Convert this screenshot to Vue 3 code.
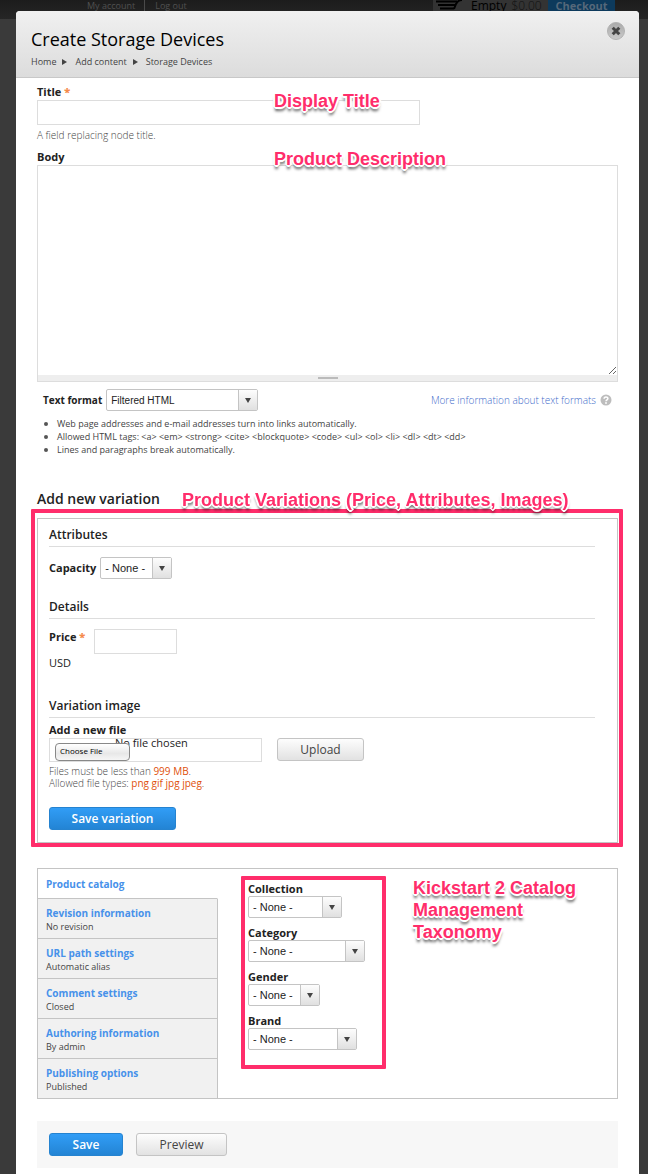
<script setup>
import { ref } from 'vue'

const title = ref('')
const body = ref('')
const price = ref('')

const tabs = [
  { name: 'Product catalog', summary: '' },
  { name: 'Revision information', summary: 'No revision' },
  { name: 'URL path settings', summary: 'Automatic alias' },
  { name: 'Comment settings', summary: 'Closed' },
  { name: 'Authoring information', summary: 'By admin' },
  { name: 'Publishing options', summary: 'Published' },
]
const active = ref(0)

const taxonomies = [
  { id: 'collection', label: 'Collection', size: 'w94' },
  { id: 'category', label: 'Category', size: 'w117' },
  { id: 'gender', label: 'Gender', size: 'w72' },
  { id: 'brand', label: 'Brand', size: 'w109' },
]
</script>

<template>
  <div class="page">
    <div class="topbar">
      <nav class="account">
        <a href="#">My account</a>
        <a href="#">Log out</a>
      </nav>
      <div class="cart">
        <svg class="cart-icon" viewBox="0 0 28 12" width="28" height="12" aria-hidden="true">
          <path d="M26 0C22 0 21 2 20 4L18 9" fill="none" stroke="#000" stroke-width="2" />
          <path d="M0 1.500H21M2 5H20M4 8.500H18" fill="none" stroke="#000" stroke-width="2.200" />
        </svg>
        <span class="cart-state">Empty</span>
        <span class="cart-total">$0.00</span>
      </div>
      <a class="checkout" href="#">Checkout</a>
    </div>

    <main class="overlay">
      <header class="head">
        <h1>Create Storage Devices</h1>
        <nav class="crumbs">
          <a href="#">Home</a><i></i><a href="#">Add content</a><i></i><a href="#">Storage Devices</a>
        </nav>
        <button class="close" type="button" aria-label="Close">
          <svg viewBox="0 0 18 18" width="18" height="18">
            <defs>
              <linearGradient id="closeFill" x1="0" y1="0" x2="0" y2="1">
                <stop offset="0" stop-color="#a9a9a9" />
                <stop offset="1" stop-color="#cacaca" />
              </linearGradient>
            </defs>
            <circle cx="9" cy="9" r="8.500" fill="url(#closeFill)" stroke="#b2b2b2" />
            <path d="M5.700 5.700L12.300 12.300M12.300 5.700L5.700 12.300" stroke="#444" stroke-width="3" />
          </svg>
        </button>
      </header>

      <form class="content" @submit.prevent>
        <div class="field title-field">
          <label for="title">Title <b class="req">*</b></label>
          <input id="title" v-model="title" class="text" type="text" />
          <p class="hint">A field replacing node title.</p>
          <span class="note note-title">Display Title</span>
        </div>

        <div class="field body-field">
          <label for="body">Body</label>
          <textarea id="body" v-model="body"></textarea>
          <div class="grip"><i></i></div>
          <span class="note note-title">Product Description</span>
        </div>

        <section class="format">
          <div class="format-row">
            <label for="format">Text format</label>
            <span class="select w152">
              <select id="format"><option>Filtered HTML</option></select>
              <span class="arrow"><i></i></span>
            </span>
            <a class="more" href="#">More information about text formats
              <svg viewBox="0 0 12 12" width="12" height="12" aria-hidden="true">
                <circle cx="6" cy="6" r="5.500" fill="#bdbdbd" />
                <path d="M4.100 4.700C4.100 2.400 7.900 2.400 7.900 4.600C7.900 5.900 6 5.900 6 7.300" fill="none" stroke="#fff" stroke-width="1.500" />
                <circle cx="6" cy="9" r="0.900" fill="#fff" />
              </svg>
            </a>
          </div>
          <ul>
            <li>Web page addresses and e-mail addresses turn into links automatically.</li>
            <li>Allowed HTML tags: &lt;a&gt; &lt;em&gt; &lt;strong&gt; &lt;cite&gt; &lt;blockquote&gt; &lt;code&gt; &lt;ul&gt; &lt;ol&gt; &lt;li&gt; &lt;dl&gt; &lt;dt&gt; &lt;dd&gt;</li>
            <li>Lines and paragraphs break automatically.</li>
          </ul>
        </section>

        <div class="variation-head">
          <h2>Add new variation</h2>
          <span class="note note-variation">Product Variations (Price, Attributes, Images)</span>
        </div>

        <section class="variation">
          <h3>Attributes</h3>
          <div class="row capacity">
            <label for="capacity">Capacity</label>
            <span class="select w72">
              <select id="capacity"><option>- None -</option></select>
              <span class="arrow"><i></i></span>
            </span>
          </div>

          <h3>Details</h3>
          <div class="row price">
            <label for="price">Price <b class="req">*</b></label>
            <input id="price" v-model="price" class="text" type="text" />
          </div>
          <p class="currency">USD</p>

          <h3>Variation image</h3>
          <label class="file-label" for="file">Add a new file</label>
          <div class="row upload">
            <div class="file">
              <span class="file-name">No file chosen</span>
              <span class="file-button">Choose File</span>
              <input id="file" type="file" />
            </div>
            <button class="btn upload-btn" type="button">Upload</button>
          </div>
          <p class="hint file-hint">
            Files must be less than <em>999 MB</em>.<br />
            Allowed file types: <em>png gif jpg jpeg</em>.
          </p>
          <button class="btn primary variation-btn" type="button">Save variation</button>
          <div class="frame frame-variation"></div>
        </section>

        <section class="tabs">
          <div class="tab-list">
            <button
              v-for="(tab, i) in tabs"
              :key="tab.name"
              type="button"
              class="tab"
              :class="{ active: i === active }"
              @click="active = i"
            >
              <strong>{{ tab.name }}</strong>
              <small v-if="tab.summary">{{ tab.summary }}</small>
            </button>
          </div>
          <div class="pane">
            <div class="terms">
              <div v-for="t in taxonomies" :key="t.id" class="term">
                <label :for="t.id">{{ t.label }}</label>
                <span class="select" :class="t.size">
                  <select :id="t.id"><option>- None -</option></select>
                  <span class="arrow"><i></i></span>
                </span>
              </div>
              <div class="frame frame-terms"></div>
            </div>
            <p class="note note-terms">Kickstart 2 Catalog<br />Management<br />Taxonomy</p>
          </div>
        </section>

        <div class="actions">
          <button class="btn primary save" type="submit">Save</button>
          <button class="btn preview" type="button">Preview</button>
        </div>
      </form>
    </main>
  </div>
</template>

<style>
body {
  background: #3a3a3a;
}
</style>

<style scoped>
* {
  box-sizing: border-box;
}

.page {
  min-height: 100vh;
  display: flex;
  flex-direction: column;
  background: #3a3a3a;
  color: #222;
  font-family: "Open Sans", sans-serif;
  font-size: 11px;
}

h1, h2, h3, p, ul {
  margin: 0;
  padding: 0;
}

a {
  color: inherit;
  text-decoration: none;
}

button {
  margin: 0;
  padding: 0;
  font-family: inherit;
}

/* Dimmed site header */
.topbar {
  display: flex;
  height: 19px;
  padding-left: 77px;
  padding-right: 33px;
  background: linear-gradient(#1c1c1c, #262626);
  line-height: 11px;
}

.account {
  flex: 1;
  display: flex;
  color: #505050;
  font-size: 9px;
}

.account a {
  height: 11px;
  padding: 0 9px 0 10px;
}

.account a + a {
  border-left: 1px solid #4a4a4a;
}

.cart {
  display: flex;
  width: 115px;
  padding-left: 3px;
  background: #333;
  font-size: 12px;
}

.cart-state {
  margin-left: 7px;
  color: #000;
}

.cart-total {
  margin-left: 5px;
  color: #111;
  font-weight: 300;
}

.checkout {
  width: 67px;
  background: #0d3a5c;
  color: #56687a;
  font-size: 11px;
  font-weight: 700;
  text-align: center;
}

/* Overlay */
.overlay {
  position: relative;
  flex: 1;
  margin: -8px 9px 0 16px;
  border-radius: 4px 4px 0 0;
  background: #fff;
}

.head {
  position: relative;
  height: 67px;
  padding: 15px 15px 0;
  border-bottom: 1px solid #c8c8c8;
  border-radius: 4px 4px 0 0;
  background: linear-gradient(#f0f0f0, #dcdcdc);
}

h1 {
  color: #000;
  font-size: 18px;
  font-weight: 400;
  line-height: 26px;
}

.crumbs {
  display: flex;
  align-items: center;
  color: #444;
  font-size: 9px;
  line-height: 20px;
}

.crumbs i {
  margin: 0 8px 0 6px;
  border: 3px solid transparent;
  border-left: 5px solid #444;
  border-right: 0;
}

.close {
  position: absolute;
  top: 11px;
  right: 14px;
  width: 18px;
  height: 18px;
  border: 0;
  background: none;
}

.close svg {
  display: block;
}

.content {
  padding: 6px 21px 7px;
}

/* Fields */
label {
  display: block;
  font-size: 11px;
  font-weight: 700;
  line-height: 16px;
}

.req {
  color: #f58a4b;
}

.field {
  position: relative;
}

.text {
  display: block;
  height: 25px;
  padding: 0 6px;
  border: 1px solid #ddd;
  background: #fff;
}

.title-field .text {
  width: 66%;
}

.hint {
  color: #444;
  font-size: 10px;
  font-weight: 300;
  line-height: 16px;
}

.title-field .hint {
  margin: 2px 0 6px;
}

textarea {
  display: block;
  width: 100%;
  height: 210px;
  padding: 4px;
  border: 1px solid #ddd;
  border-bottom: 0;
  background: #fff;
  resize: vertical;
}

.grip {
  display: flex;
  align-items: center;
  justify-content: center;
  height: 7px;
  border: 1px solid #ddd;
  border-top: 0;
  background: #eee;
}

.grip i {
  width: 20px;
  height: 2px;
  background: #bbb;
}

.select {
  position: relative;
  display: block;
  height: 22px;
}

.w72 { width: 72px; }
.w94 { width: 94px; }
.w109 { width: 109px; }
.w117 { width: 117px; }
.w152 { width: 152px; }

.select select {
  width: 100%;
  height: 100%;
  padding: 0 20px 0 4px;
  border: 1px solid #c4c4c4;
  border-radius: 2px;
  appearance: none;
  background: #fff;
  color: #222;
  font-family: "Liberation Sans", Arial, sans-serif;
  font-size: 11px;
}

.arrow {
  position: absolute;
  top: 1px;
  right: 1px;
  bottom: 1px;
  display: flex;
  align-items: center;
  justify-content: center;
  width: 19px;
  border-left: 1px solid #c4c4c4;
  background: linear-gradient(#fdfdfd, #e0e0e0);
  pointer-events: none;
}

.arrow i {
  border: 3px solid transparent;
  border-top: 5px solid #444;
  border-bottom: 0;
}

/* Text format */
.format {
  padding: 7px 6px 0;
}

.format-row {
  display: flex;
  align-items: center;
  gap: 4px;
}

.format-row label,
.format-row select {
  font-size: 10px;
}

.more {
  display: flex;
  align-items: center;
  gap: 4px;
  margin-left: auto;
  color: #3f6ccb;
  font-size: 10px;
  font-weight: 300;
  line-height: 18px;
}

ul {
  margin-top: 6px;
  list-style: none;
  color: #444;
  font-size: 9px;
  line-height: 13px;
}

li {
  display: flex;
  align-items: center;
}

li::before {
  content: "";
  width: 4px;
  height: 4px;
  margin: 0 9px 0 1px;
  border-radius: 50%;
  background: #555;
}

/* Variation */
.variation-head {
  position: relative;
  margin-top: 33px;
}

h2 {
  font-size: 14px;
  font-weight: 600;
  line-height: 20px;
}

h3 {
  padding-top: 2px;
  border-bottom: 1px solid #ddd;
  font-size: 12px;
  font-weight: 600;
  line-height: 22px;
}

.variation {
  position: relative;
  margin-top: 9px;
  padding: 3px 22px 12px 11px;
  border: 1px solid #c4c4c4;
}

.row {
  display: flex;
}

.capacity {
  align-items: center;
  gap: 4px;
  margin: 10px 0 15px;
}

.price {
  gap: 9px;
  margin-top: 10px;
}

.price .text {
  width: 83px;
}

.currency {
  margin: 1px 0 22px;
  line-height: 16px;
}

.file-label {
  margin-top: 4px;
}

.upload {
  gap: 15px;
}

.file {
  position: relative;
  width: 213px;
  height: 24px;
  border: 1px solid #ddd;
}

.file-name {
  position: absolute;
  top: -4px;
  left: 65px;
  line-height: 16px;
}

.file-button {
  position: absolute;
  top: 4px;
  left: 5px;
  width: 75px;
  height: 18px;
  padding-left: 4px;
  border: 1px solid #888;
  border-radius: 4px;
  background: linear-gradient(#fff, #e8e8e8 60%, #f6f6f6);
  color: #000;
  font-size: 8px;
  line-height: 14px;
}

.file input {
  position: absolute;
  inset: 0;
  width: 100%;
  opacity: 0;
}

.file-hint {
  margin: 3px 0 18px;
  line-height: 12px;
}

.file-hint em {
  color: #e0500a;
  font-style: normal;
  font-weight: 400;
}

.btn {
  height: 23px;
  border: 1px solid #c4c4c4;
  border-radius: 3px;
  background: linear-gradient(#fdfdfd, #e2e2e2);
  color: #444;
  font-size: 12px;
  line-height: 20px;
}

.primary {
  border-color: #2583d0;
  background: linear-gradient(#319df6, #2384d4);
  color: #fff;
  font-weight: 600;
}

.upload-btn { width: 87px; }
.variation-btn { width: 127px; }
.save { width: 74px; }
.preview { width: 91px; }

/* Vertical tabs */
.tabs {
  display: flex;
  margin-top: 25px;
  border: 1px solid #c4c4c4;
}

.tab-list {
  width: 180px;
}

.tab {
  display: block;
  width: 100%;
  height: 40px;
  padding: 2px 8px 0;
  border: 0;
  border-right: 1px solid #c4c4c4;
  border-bottom: 1px solid #c4c4c4;
  background: #f1f1f1;
  text-align: left;
}

.tab:last-child {
  height: 39px;
  border-bottom: 0;
}

.tab.active {
  height: 30px;
  padding-top: 0;
  border-right-color: transparent;
  background: #fff;
}

.tab strong {
  display: block;
  color: #4791ea;
  font-size: 10px;
  line-height: 14px;
}

.tab small {
  display: block;
  color: #444;
  font-size: 9px;
  line-height: 13px;
}

.pane {
  flex: 1;
  display: flex;
  gap: 48px;
  padding: 12px 8px 0 30px;
}

.terms {
  position: relative;
  align-self: flex-start;
  width: 117px;
}

.term {
  margin-bottom: 7px;
}

.term label {
  line-height: 15px;
}

.actions {
  display: flex;
  gap: 13px;
  margin-top: 22px;
  padding: 12px;
  background: #f7f7f7;
}

/* Callouts */
.note {
  color: #ff2d6b;
  font-family: "Liberation Sans", Arial, sans-serif;
  font-size: 18px;
  font-weight: 700;
  line-height: 22px;
  white-space: nowrap;
  text-shadow:
    2px 0 0 #fff, -2px 0 0 #fff, 0 2px 0 #fff, 0 -2px 0 #fff,
    1px 1px 0 #fff, -1px 1px 0 #fff, 1px -1px 0 #fff, -1px -1px 0 #fff,
    0 4px 3px rgba(0, 0, 0, 0.7);
}

.note-title {
  position: absolute;
  top: -1px;
  left: 237px;
  z-index: 1;
}

.title-field .note-title {
  top: 6px;
}

.note-variation {
  position: absolute;
  top: 0;
  left: 145px;
  z-index: 1;
}

.note-terms {
  margin-top: -4px;
}

.frame {
  position: absolute;
  border: 4px solid #ff2d6b;
  border-radius: 1px;
  pointer-events: none;
}

.frame-variation {
  inset: -10px -6px -5px -7px;
}

.frame-terms {
  inset: -5px -21px -12px -7px;
}
</style>
